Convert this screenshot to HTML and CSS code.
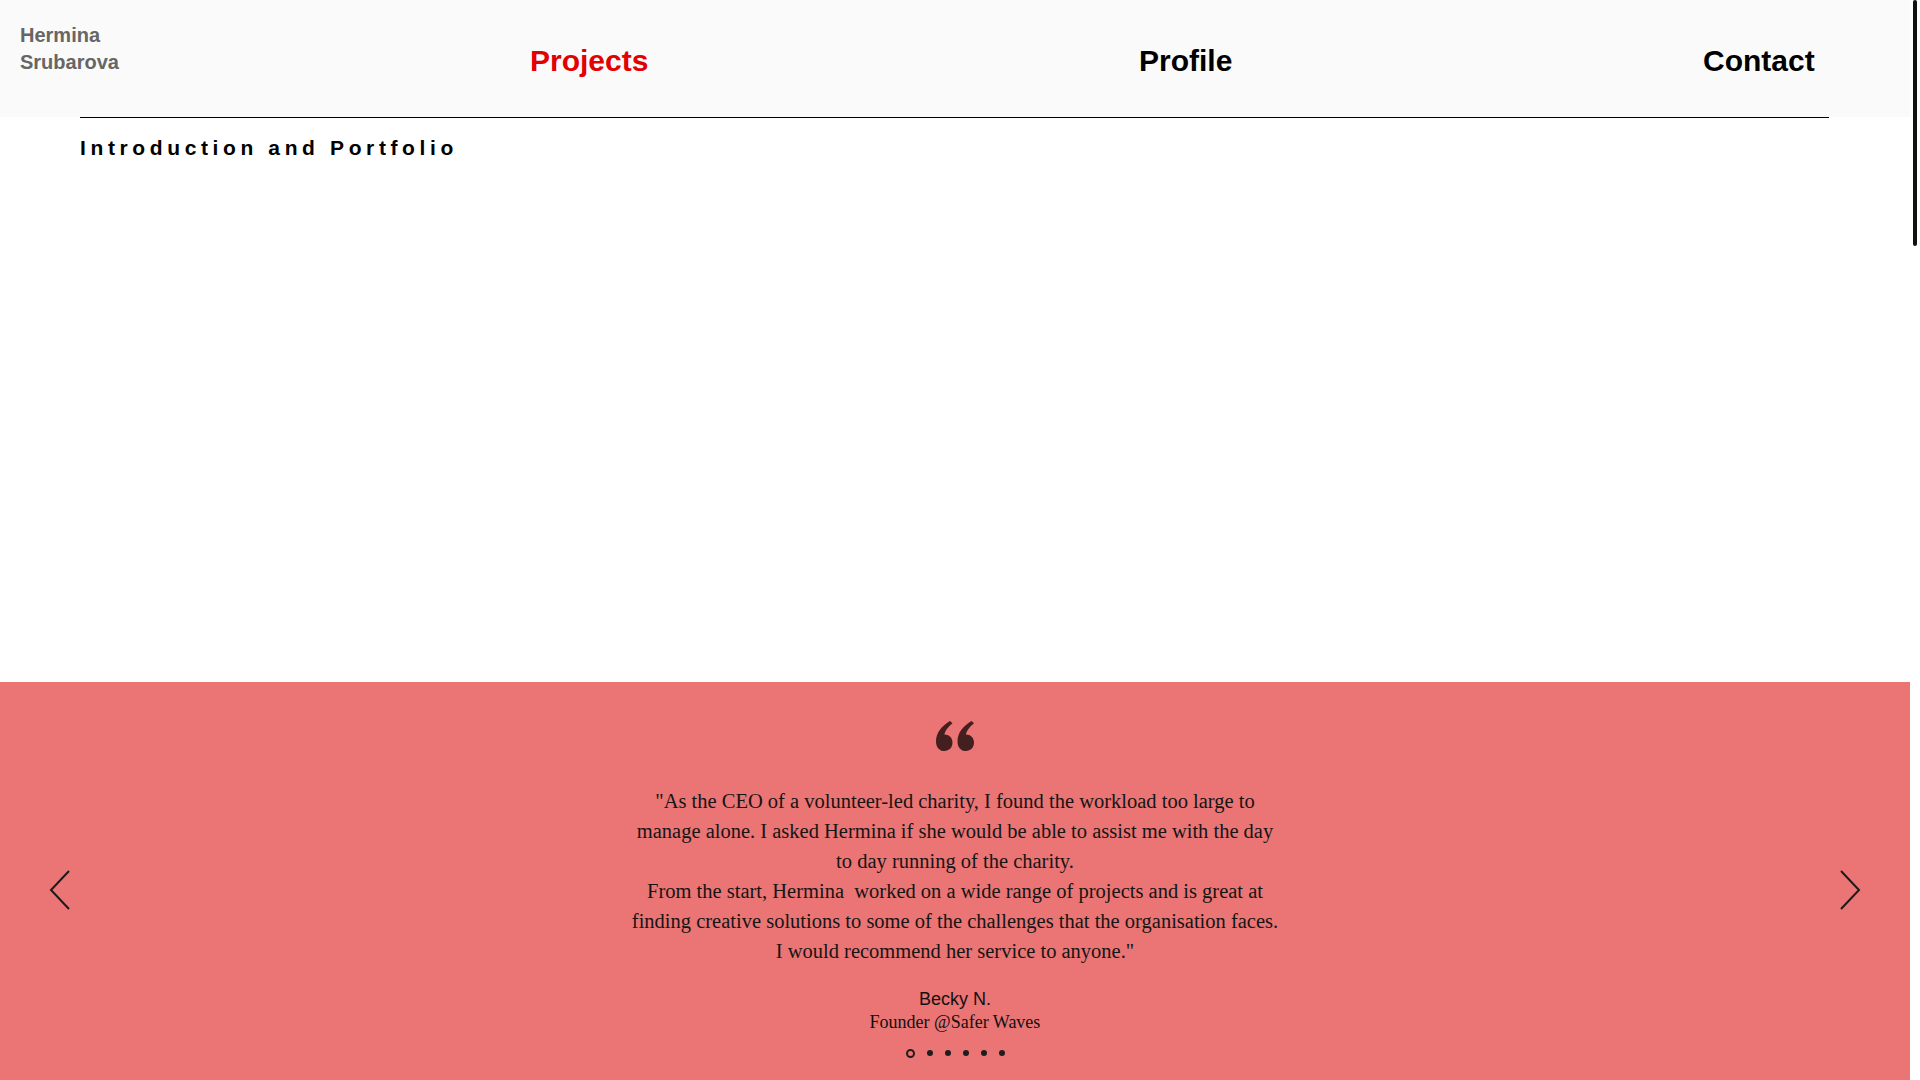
FILE: index.html
```html
<!DOCTYPE html>
<html lang="en">
<head>
<meta charset="utf-8">
<title>Hermina Srubarova</title>
<link rel="stylesheet" href="styles.css">
</head>
<body>
<div class="page">
  <header class="site-header">
    <div class="brand">Hermina<br>Srubarova</div>
    <nav class="menu">
      <a class="menu-item active" href="#">Projects</a>
      <a class="menu-item" href="#">Profile</a>
      <a class="menu-item" href="#">Contact</a>
    </nav>
  </header>
  <div class="rule"></div>
  <h1 class="intro">Introduction and Portfolio</h1>

  <section class="testimonials">
    <button class="arrow arrow-left" aria-label="Previous">
      <svg viewBox="0 0 22 40" width="22" height="40"><polyline points="20,1 2,20 20,39" fill="none" stroke="#1b1b1b" stroke-width="2"/></svg>
    </button>
    <div class="slide">
      <svg class="quote-mark" viewBox="0 0 38 30" width="38" height="30">
        <path d="M14 0 L16.5 2.2 C11.5 6.5 8.8 10 8.4 13.6 C13 13.6 16.5 16.8 16.5 21.6 C16.5 26.8 13 30 8.4 30 C3.4 30 0 26.2 0 20.4 C0 12 5.4 5.2 14 0 Z" fill="#43201f"/>
        <path d="M35.5 0 L38 2.2 C33 6.5 30.3 10 29.9 13.6 C34.5 13.6 38 16.8 38 21.6 C38 26.8 34.5 30 29.9 30 C24.9 30 21.5 26.2 21.5 20.4 C21.5 12 26.9 5.2 35.5 0 Z" fill="#43201f"/>
      </svg>
      <p class="quote-text">"As the CEO of a volunteer-led charity, I found the workload too large to manage alone. I asked Hermina if she would be able to assist me with the day to day running of the charity.<br>From the start, Hermina&nbsp; worked on a wide range of projects and is great at finding creative solutions to some of the challenges that the organisation faces.<br>I would recommend her service to anyone."</p>
      <p class="author">Becky N.</p>
      <p class="role">Founder @Safer Waves</p>
      <div class="dots">
        <span class="dot current"></span>
        <span class="dot"></span>
        <span class="dot"></span>
        <span class="dot"></span>
        <span class="dot"></span>
        <span class="dot"></span>
      </div>
    </div>
    <button class="arrow arrow-right" aria-label="Next">
      <svg viewBox="0 0 22 40" width="22" height="40"><polyline points="2,1 20,20 2,39" fill="none" stroke="#1b1b1b" stroke-width="2"/></svg>
    </button>
  </section>
</div>
<div class="scrollbar"><div class="scroll-thumb"></div></div>
</body>
</html>
```

FILE: styles.css
```css
html, body {
  margin: 0;
  padding: 0;
  height: 100%;
  overflow: hidden;
  background: #ffffff;
}

body {
  font-family: "Liberation Sans", Arial, sans-serif;
  color: #000;
}

.page {
  width: 1910px;
  min-height: 100%;
  display: flex;
  flex-direction: column;
}

.site-header {
  height: 117px;
  background: #fafafa;
  display: flex;
  align-items: flex-start;
}

.brand {
  width: 510px;
  padding: 22px 0 0 20px;
  font-size: 20px;
  line-height: 27px;
  font-weight: 700;
  color: #666666;
}

.menu {
  display: grid;
  grid-template-columns: 609px 564px auto;
  padding-top: 43px;
}

.menu-item {
  font-size: 30px;
  line-height: 36px;
  font-weight: 700;
  color: #000;
  text-decoration: none;
}

.menu-item.active {
  color: #e30000;
}

.rule {
  height: 1px;
  background: #000;
  margin: 0 81px 0 80px;
}

.intro {
  margin: 18px 0 0 80px;
  font-size: 21px;
  line-height: 24px;
  font-weight: 700;
  letter-spacing: 0.22em;
  color: #000;
}

.testimonials {
  margin-top: 522px;
  flex: 1;
  background: #eb7474;
  display: flex;
  align-items: flex-start;
  padding: 0 49px;
  min-height: 398px;
}

.arrow {
  margin-top: 188px;
  width: 22px;
  height: 40px;
  padding: 0;
  border: 0;
  background: none;
  display: block;
}

.arrow svg {
  display: block;
}

.slide {
  flex: 1;
  display: flex;
  flex-direction: column;
  align-items: center;
  padding-top: 39px;
}

.quote-mark {
  display: block;
}

.quote-text {
  margin: 35px 0 0;
  width: 648px;
  font-family: "Liberation Serif", "Times New Roman", serif;
  font-size: 20.5px;
  line-height: 30px;
  text-align: center;
  color: #151515;
}

.author {
  margin: 22px 0 0;
  font-size: 18px;
  line-height: 23px;
  color: #111;
}

.role {
  margin: 0;
  font-family: "Liberation Serif", "Times New Roman", serif;
  font-size: 18px;
  line-height: 22px;
  color: #111;
}

.dots {
  margin-top: 13px;
  display: flex;
  align-items: center;
  gap: 12px;
  height: 14px;
}

.dot {
  width: 6px;
  height: 6px;
  border-radius: 50%;
  background: #1e1e1e;
}

.dot.current {
  width: 5px;
  height: 5px;
  background: transparent;
  border: 2px solid #1e1e1e;
}

.scrollbar {
  position: fixed;
  top: 0;
  right: 0;
  width: 10px;
  height: 100%;
  background: #ffffff;
}

.scroll-thumb {
  margin-left: 3px;
  width: 4px;
  height: 246px;
  border-radius: 2px;
  background: #111;
}
```
